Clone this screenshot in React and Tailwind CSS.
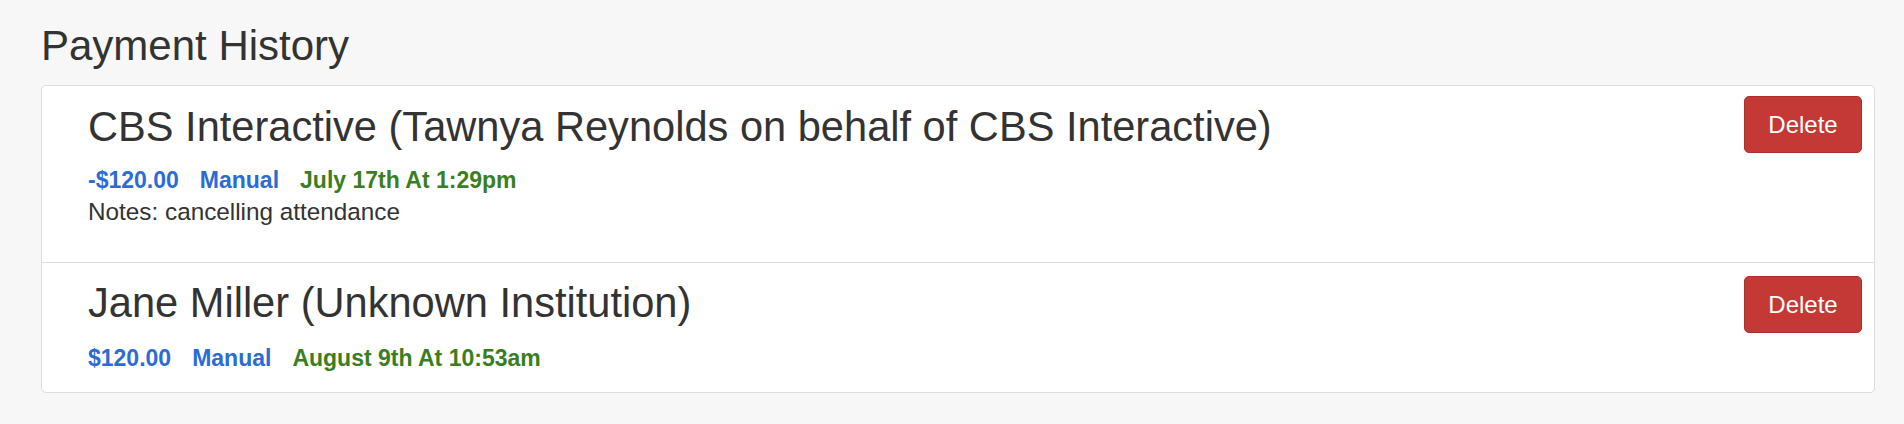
const payments = [
  {
    id: 1,
    name: 'CBS Interactive (Tawnya Reynolds on behalf of CBS Interactive)',
    amount: '-$120.00',
    method: 'Manual',
    date: 'July 17th At 1:29pm',
    notes: 'cancelling attendance',
    rowClass: 'pt-[18px] pb-[35px]',
    btnClass: 'mt-[10px]',
  },
  {
    id: 2,
    name: 'Jane Miller (Unknown Institution)',
    amount: '$120.00',
    method: 'Manual',
    date: 'August 9th At 10:53am',
    notes: null,
    rowClass: 'pt-[17px] pb-[18px]',
    btnClass: 'mt-[13px]',
  },
]

const App = () => {
  return (
    <div className="min-h-[424px] bg-[#f7f7f7] pt-[23px] pl-[41px] pr-[29px] font-['Liberation_Sans',Arial,sans-serif] text-[#333333]">
      <h3 className="text-[42px] leading-[46px] font-normal">Payment History</h3>

      <div className="mt-[16px] bg-white border border-[#dddddd] rounded-[5px]">
        {payments.map((p, i) => (
          <div
            key={p.id}
            className={`flex justify-between pl-[46px] pr-[12px] ${i > 0 ? 'border-t border-[#dddddd]' : ''}`}
          >
            <div className={p.rowClass}>
              <h4 className="text-[41.6px] leading-[46px] font-normal">{p.name}</h4>
              <div className={`flex gap-[21px] text-[23px] leading-[31px] font-bold ${i === 0 ? 'mt-[15px]' : 'mt-[17px]'}`}>
                <span className="text-[#2c6bd6]">{p.amount}</span>
                <span className="text-[#2c6bd6]">{p.method}</span>
                <span className="text-[#3a7e22]">{p.date}</span>
              </div>
              {p.notes && (
                <p className="text-[24.3px] leading-[31px]">Notes: {p.notes}</p>
              )}
            </div>
            <button
              className={`${p.btnClass} w-[118px] h-[57px] rounded-[5px] bg-[#c43835] border border-[#ad2f2c] text-white text-[24px] leading-none`}
            >
              Delete
            </button>
          </div>
        ))}
      </div>
    </div>
  )
}

export default App
